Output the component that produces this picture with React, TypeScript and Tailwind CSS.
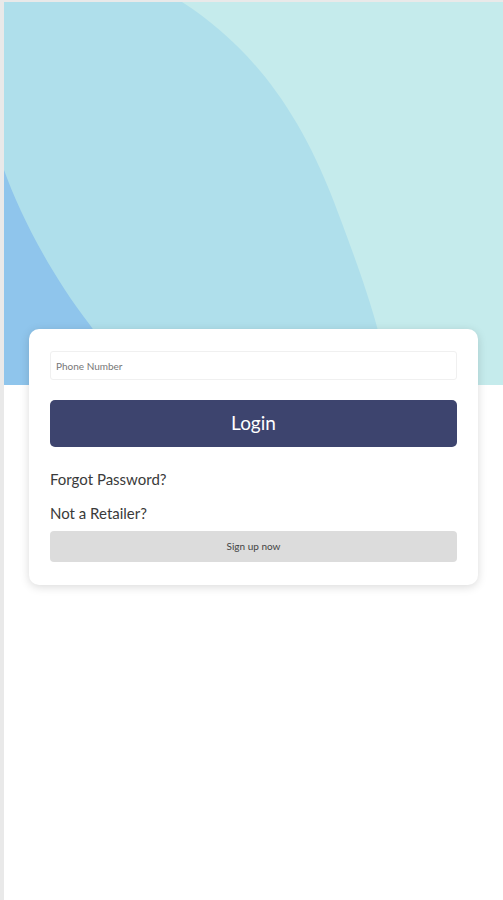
export default function App() {
  return (
    <div className="min-h-[900px] bg-white border-l-4 border-t-2 border-[#e9e9e9] font-['Lato',sans-serif]">
      {/* Hero waves */}
      <div className="h-[383px] bg-[#afdfeb]">
        <svg viewBox="0 0 499 383" preserveAspectRatio="none" className="block w-full h-full">
          <path d="M178 0 C 240 40, 292 100, 330 200 S 376 330, 386 383 L499 383 L499 0 Z" fill="#c5ebec" />
          <path d="M0 168 C 15 210, 45 270, 86 323 L 128 383 L0 383 Z" fill="#8fc5ec" />
        </svg>
      </div>

      {/* Login card */}
      <div className="relative z-10 px-[25px] -mt-[56px]">
        <div className="bg-white rounded-[10px] shadow-[0_2px_10px_rgba(0,0,0,0.15)] px-[21px] pt-[22px] pb-[23px]">
          <input
            placeholder="Phone Number"
            className="w-full h-[29px] border border-[#f0f0f0] rounded-[3px] px-[5px] text-[10px] text-[#555] placeholder:text-[#777] outline-none"
          />
          <button className="mt-[20px] w-full h-[47px] bg-[#3d446e] rounded-[5px] text-white text-[19px]">
            Login
          </button>
          <p className="mt-[22px] text-[15px] leading-[20px] text-[#3a3a3a]">Forgot Password?</p>
          <p className="mt-[14px] text-[15px] leading-[20px] text-[#3a3a3a]">Not a Retailer?</p>
          <button className="mt-[8px] w-full h-[31px] bg-[#dcdcdc] rounded-[4px] text-[10px] text-[#444]">
            Sign up now
          </button>
        </div>
      </div>
    </div>
  )
}
